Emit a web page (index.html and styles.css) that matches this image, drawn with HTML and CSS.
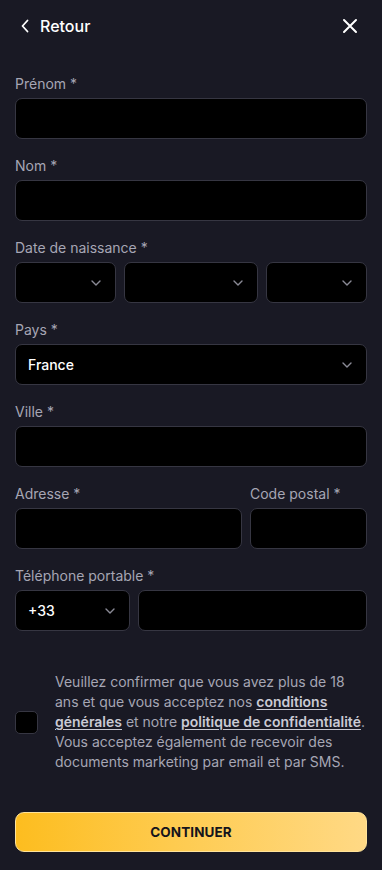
FILE: index.html
```html
<!DOCTYPE html>
<html lang="fr">
<head>
<meta charset="utf-8">
<title>Inscription</title>
<link rel="stylesheet" href="styles.css">
</head>
<body>
<div class="page">
  <header class="topbar">
    <button class="back" type="button">
      <svg width="10" height="14" viewBox="0 0 10 14"><path d="M7.5 1.5L2.5 7l5 5.5" fill="none" stroke="#fff" stroke-width="1.8" stroke-linecap="round" stroke-linejoin="round"/></svg>
      <span>Retour</span>
    </button>
    <button class="close" type="button" aria-label="Fermer">
      <svg width="16" height="16" viewBox="0 0 16 16"><path d="M2 2l12 12M14 2L2 14" stroke="#fff" stroke-width="2" stroke-linecap="round"/></svg>
    </button>
  </header>

  <form class="form">
    <div class="field">
      <label class="label">Prénom *</label>
      <div class="input"></div>
    </div>
    <div class="field">
      <label class="label">Nom *</label>
      <div class="input"></div>
    </div>
    <div class="field">
      <label class="label">Date de naissance *</label>
      <div class="row dob">
        <div class="input select"><span></span><svg class="chev" width="10" height="6" viewBox="0 0 10 6"><path d="M1 1l4 4 4-4" fill="none" stroke="#8a8a96" stroke-width="1.4" stroke-linecap="round" stroke-linejoin="round"/></svg></div>
        <div class="input select"><span></span><svg class="chev" width="10" height="6" viewBox="0 0 10 6"><path d="M1 1l4 4 4-4" fill="none" stroke="#8a8a96" stroke-width="1.4" stroke-linecap="round" stroke-linejoin="round"/></svg></div>
        <div class="input select"><span></span><svg class="chev" width="10" height="6" viewBox="0 0 10 6"><path d="M1 1l4 4 4-4" fill="none" stroke="#8a8a96" stroke-width="1.4" stroke-linecap="round" stroke-linejoin="round"/></svg></div>
      </div>
    </div>
    <div class="field">
      <label class="label">Pays *</label>
      <div class="input select"><span class="value">France</span><svg class="chev" width="10" height="6" viewBox="0 0 10 6"><path d="M1 1l4 4 4-4" fill="none" stroke="#8a8a96" stroke-width="1.4" stroke-linecap="round" stroke-linejoin="round"/></svg></div>
    </div>
    <div class="field">
      <label class="label">Ville *</label>
      <div class="input"></div>
    </div>
    <div class="row addr">
      <div class="field">
        <label class="label">Adresse *</label>
        <div class="input"></div>
      </div>
      <div class="field">
        <label class="label">Code postal *</label>
        <div class="input"></div>
      </div>
    </div>
    <div class="field">
      <label class="label">Téléphone portable *</label>
      <div class="row phone">
        <div class="input select"><span class="value">+33</span><svg class="chev" width="10" height="6" viewBox="0 0 10 6"><path d="M1 1l4 4 4-4" fill="none" stroke="#8a8a96" stroke-width="1.4" stroke-linecap="round" stroke-linejoin="round"/></svg></div>
        <div class="input"></div>
      </div>
    </div>

    <div class="consent">
      <span class="checkbox"></span>
      <p class="consent-text">Veuillez confirmer que vous avez plus de 18 ans et que vous acceptez nos <a href="#">conditions générales</a> et notre <a href="#">politique de confidentialité</a>. Vous acceptez également de recevoir des documents marketing par email et par SMS.</p>
    </div>

    <button class="submit" type="button">CONTINUER</button>
  </form>
</div>
</body>
</html>
```

FILE: styles.css
```css
* { box-sizing: border-box; }
html, body {
  margin: 0;
  padding: 0;
  background: #191924;
}
body {
  font-family: Inter, "Noto Sans", "Liberation Sans", sans-serif;
  color: #fff;
  width: 382px;
  height: 870px;
  overflow: hidden;
}
.page {
  padding: 0 15px;
}
.topbar {
  height: 52px;
  display: flex;
  align-items: center;
  justify-content: space-between;
}
.back, .close {
  background: none;
  border: 0;
  padding: 0;
  color: #fff;
  font: inherit;
  display: flex;
  align-items: center;
  cursor: pointer;
}
.back {
  gap: 10px;
  margin-left: 5px;
  font-size: 16px;
  font-weight: 500;
}
.close {
  margin-right: 9px;
}
.form {
  margin-top: 22px;
  display: flex;
  flex-direction: column;
  gap: 17px;
}
.field {
  display: flex;
  flex-direction: column;
  gap: 4px;
  min-width: 0;
}
.label {
  font-size: 14px;
  line-height: 20px;
  color: #a6a6b4;
}
.input {
  height: 41px;
  background: #000;
  border: 1px solid #363642;
  border-radius: 7px;
}
.select {
  display: flex;
  align-items: center;
  justify-content: space-between;
  padding: 0 14px 0 12px;
}
.select .value {
  font-size: 14px;
  font-weight: 500;
  color: #fff;
}
.chev { flex: none; }
.row { display: grid; gap: 8px; }
.dob { grid-template-columns: 3fr 4fr 3fr; }
.addr { grid-template-columns: 227fr 117fr; }
.phone { grid-template-columns: 115fr 229fr; }

.consent {
  margin-top: 24px;
  display: flex;
  align-items: center;
  gap: 17px;
}
.checkbox {
  flex: none;
  width: 23px;
  height: 23px;
  background: #000;
  border: 1px solid #363642;
  border-radius: 5px;
}
.consent-text {
  margin: 0;
  font-size: 14px;
  line-height: 20px;
  color: #a6a6b4;
}
.consent-text a {
  color: #cacad4;
  font-weight: 600;
  text-decoration: underline;
  text-underline-offset: 2px;
}
.submit {
  margin-top: 23px;
  height: 40px;
  border: 1px solid #ffe39a;
  border-radius: 9px;
  background: linear-gradient(90deg, #fdbd1f 0%, #fecb4f 45%, #ffd985 100%);
  color: #14141c;
  font-family: inherit;
  font-size: 13.5px;
  font-weight: 700;
  letter-spacing: 0.1px;
  cursor: pointer;
}
```
